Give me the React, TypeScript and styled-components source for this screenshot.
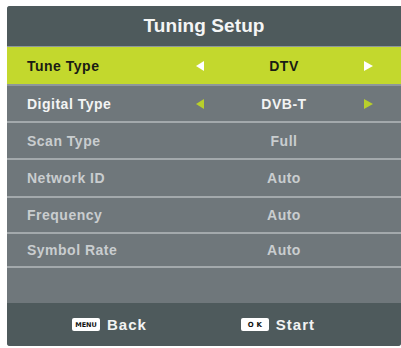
import React from "react";
import styled, { createGlobalStyle } from "styled-components";

const Global = createGlobalStyle`
  html, body { margin: 0; padding: 0; background: #ffffff; }
  body { font-family: "Liberation Sans", Arial, sans-serif; }
`;

const Page = styled.div`
  width: 401px;
  height: 348px;
  padding: 6px 0 0 7px;
  box-sizing: border-box;
`;

const Panel = styled.div`
  width: 394px;
  height: 340px;
  display: flex;
  flex-direction: column;
  border-radius: 3px 0 3px 3px;
  overflow: hidden;
  background: #6f777b;
`;

const Header = styled.div`
  height: 40px;
  background: #4e5a5c;
  border-bottom: 1px solid #8f989a;
  display: flex;
  align-items: center;
  justify-content: center;
  color: #f4f5f5;
  font-weight: bold;
  font-size: 19px;
  letter-spacing: 0.1px;
`;

const Row = styled.div<{ $active?: boolean; $h: number }>`
  height: ${(p) => p.$h - 2}px;
  flex: none;
  border-bottom: 2px solid ${(p) => (p.$active ? "#8e979a" : "#a3a9ac")};
  background: ${(p) => (p.$active ? "#c3d82d" : "#6f777b")};
  display: grid;
  grid-template-columns: 168px 10px 158px 10px;
  align-items: center;
  padding-left: 20px;
  font-weight: bold;
  font-size: 14px;
  letter-spacing: 0.5px;
`;

const Label = styled.div<{ $tone: "dark" | "bright" | "dim" }>`
  color: ${(p) => (p.$tone === "dark" ? "#1a1c14" : p.$tone === "bright" ? "#f3f4f4" : "#c9cdcf")};
`;

const Value = styled.div<{ $tone: "dark" | "bright" | "dim" }>`
  text-align: center;
  color: ${(p) => (p.$tone === "dark" ? "#1a1c14" : p.$tone === "bright" ? "#f3f4f4" : "#c9cdcf")};
`;

const Arrow = styled.div<{ $dir: "left" | "right"; $color: string }>`
  width: 0;
  height: 0;
  border-top: 5px solid transparent;
  border-bottom: 5px solid transparent;
  ${(p) =>
    p.$dir === "left"
      ? `border-right: 8px solid ${p.$color};`
      : `border-left: 9px solid ${p.$color};`}
  justify-self: center;
`;

const Filler = styled.div`
  flex: 1;
  background: #6f777b;
`;

const Footer = styled.div`
  height: 43px;
  flex: none;
  background: #4e5a5c;
  display: flex;
  align-items: center;
  padding-left: 65px;
  gap: 94px;
`;

const Hint = styled.div`
  display: flex;
  align-items: center;
  gap: 7px;
  color: #f2f3f3;
  font-weight: bold;
  font-size: 15px;
  letter-spacing: 1px;
`;

const Key = styled.span<{ $spaced?: boolean }>`
  display: inline-flex;
  align-items: center;
  justify-content: center;
  width: 28px;
  height: 13px;
  background: #ffffff;
  border-radius: 2px;
  color: #111;
  font-family: "DejaVu Sans", "Liberation Sans", sans-serif;
  font-weight: bold;
  font-size: ${(p) => (p.$spaced ? "7px" : "6.5px")};
  letter-spacing: ${(p) => (p.$spaced ? "3px" : "0")};
  padding-left: ${(p) => (p.$spaced ? "3px" : "0")};
  box-sizing: border-box;
`;

type Tone = "dark" | "bright" | "dim";
const rows: { label: string; value: string; tone: Tone; h: number; arrows?: string; active?: boolean }[] = [
  { label: "Tune Type", value: "DTV", tone: "dark", h: 39, arrows: "#ffffff", active: true },
  { label: "Digital Type", value: "DVB-T", tone: "bright", h: 37, arrows: "#b8cf2b" },
  { label: "Scan Type", value: "Full", tone: "dim", h: 37 },
  { label: "Network ID", value: "Auto", tone: "dim", h: 38 },
  { label: "Frequency", value: "Auto", tone: "dim", h: 36 },
  { label: "Symbol Rate", value: "Auto", tone: "dim", h: 34 },
];

export default function App() {
  return (
    <Page>
      <Global />
      <Panel>
        <Header>Tuning Setup</Header>
        {rows.map((r) => (
          <Row key={r.label} $active={r.active} $h={r.h}>
            <Label $tone={r.tone}>{r.label}</Label>
            {r.arrows ? <Arrow $dir="left" $color={r.arrows} /> : <span />}
            <Value $tone={r.tone}>{r.value}</Value>
            {r.arrows ? <Arrow $dir="right" $color={r.arrows} /> : <span />}
          </Row>
        ))}
        <Filler />
        <Footer>
          <Hint>
            <Key>MENU</Key>
            Back
          </Hint>
          <Hint>
            <Key $spaced>OK</Key>
            Start
          </Hint>
        </Footer>
      </Panel>
    </Page>
  );
}
